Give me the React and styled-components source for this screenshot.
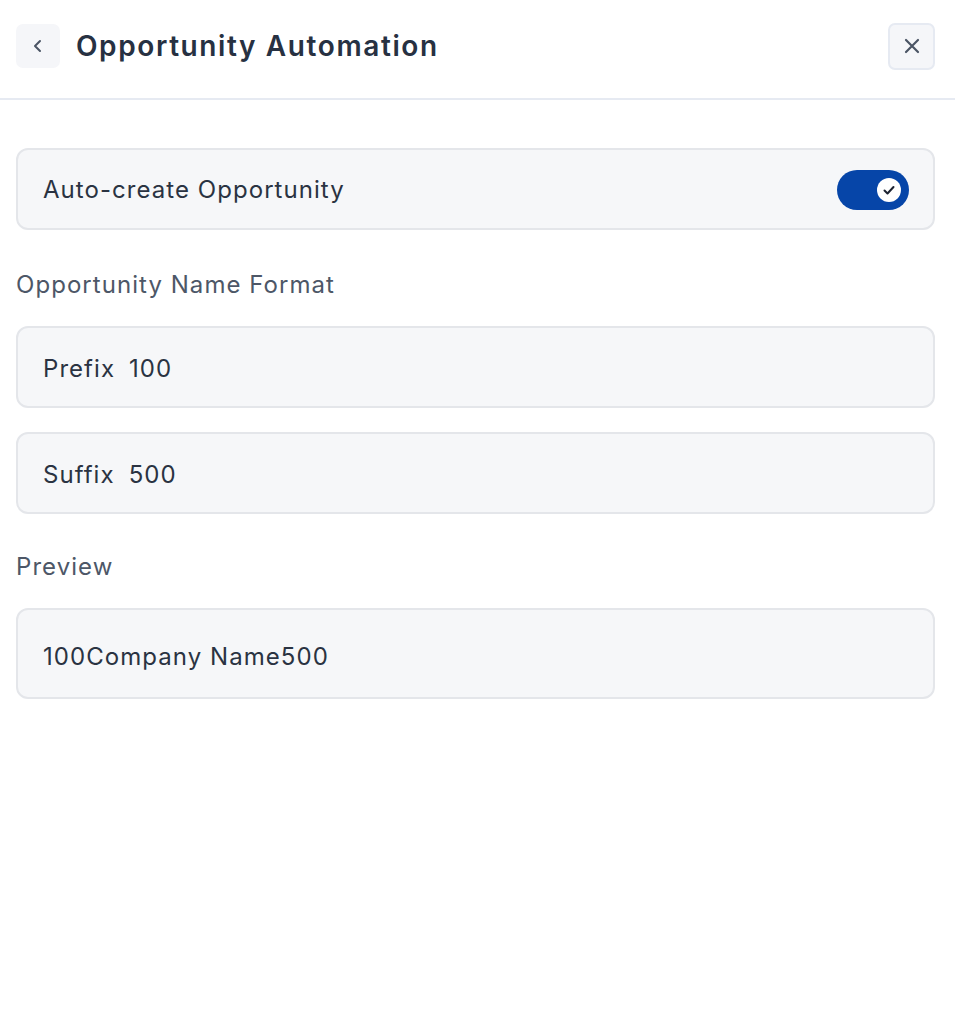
import React, { useState } from "react";
import styled, { createGlobalStyle } from "styled-components";

const GlobalStyle = createGlobalStyle`
  body {
    margin: 0;
    background: #ffffff;
    font-family: Inter, "Noto Sans", sans-serif;
    color: #273142;
  }
`;

const Page = styled.div`
  width: 955px;
  min-height: 1024px;
  background: #ffffff;
`;

const Header = styled.header`
  height: 100px;
  box-sizing: border-box;
  display: flex;
  align-items: center;
  justify-content: space-between;
  padding: 0 20px 6px 16px;
  border-bottom: 2px solid #e6eaf2;
`;

const TitleGroup = styled.div`
  display: flex;
  align-items: center;
  gap: 16px;
`;

const IconButton = styled.button`
  display: flex;
  align-items: center;
  justify-content: center;
  width: ${(p) => p.size}px;
  height: ${(p) => p.size}px;
  padding: 0;
  border-radius: 7px;
  background: #f5f6f9;
  border: ${(p) => (p.outlined ? "2px solid #e6eaf2" : "none")};
  color: #4b5565;
  cursor: pointer;
`;

const Title = styled.h1`
  margin: 0;
  font-size: 28px;
  font-weight: 600;
  color: #273142;
  letter-spacing: 1.6px;
`;

const Content = styled.main`
  padding: 48px 20px 0 16px;
  display: flex;
  flex-direction: column;
`;

const Card = styled.div`
  box-sizing: border-box;
  height: ${(p) => p.h || 82}px;
  display: flex;
  align-items: center;
  justify-content: space-between;
  padding: ${(p) => p.pt || 2}px 24px 0 25px;
  background: #f6f7f9;
  border: 2px solid #e4e6ea;
  border-radius: 12px;
  font-size: 24px;
  letter-spacing: 1.05px;
  color: #2a3342;
  margin-bottom: ${(p) => p.mb || 0}px;
`;

const Label = styled.div`
  font-size: 24px;
  letter-spacing: 1.05px;
  color: #4d5767;
  line-height: 30px;
  margin: ${(p) => p.mt}px 0 26px;
`;

const Gap = styled.span`
  display: inline-block;
  width: 14px;
`;

const Switch = styled.button`
  position: relative;
  width: 72px;
  height: 40px;
  padding: 0;
  border: none;
  border-radius: 20px;
  background: ${(p) => (p.on ? "#0645a8" : "#cfd4dc")};
  cursor: pointer;
`;

const Knob = styled.span`
  position: absolute;
  top: 8px;
  left: ${(p) => (p.on ? 40 : 8)}px;
  width: 24px;
  height: 24px;
  border-radius: 50%;
  background: #ffffff;
  display: flex;
  align-items: center;
  justify-content: center;
`;

const Chevron = () => (
  <svg width="16" height="16" viewBox="0 0 16 16" fill="none">
    <path d="M10 3L5 8l5 5" stroke="currentColor" strokeWidth="2" strokeLinecap="round" strokeLinejoin="round" />
  </svg>
);

const Cross = () => (
  <svg width="20" height="20" viewBox="0 0 20 20" fill="none">
    <path d="M4 4l12 12M16 4L4 16" stroke="currentColor" strokeWidth="2.2" strokeLinecap="round" />
  </svg>
);

const Check = () => (
  <svg width="14" height="14" viewBox="0 0 14 14" fill="none">
    <path d="M2.5 7.5l3 3 6-6.5" stroke="#1c2230" strokeWidth="2" strokeLinecap="round" strokeLinejoin="round" />
  </svg>
);

export default function App() {
  const [on, setOn] = useState(true);
  const prefix = "100";
  const suffix = "500";

  return (
    <Page>
      <GlobalStyle />
      <Header>
        <TitleGroup>
          <IconButton size={44}>
            <Chevron />
          </IconButton>
          <Title>Opportunity Automation</Title>
        </TitleGroup>
        <IconButton size={47} outlined>
          <Cross />
        </IconButton>
      </Header>
      <Content>
        <Card pt={1}>
          <span>Auto-create Opportunity</span>
          <Switch on={on} onClick={() => setOn(!on)}>
            <Knob on={on}>{on && <Check />}</Knob>
          </Switch>
        </Card>
        <Label mt={40}>Opportunity Name Format</Label>
        <Card mb={24}>
          <span>
            Prefix<Gap />
            {prefix}
          </span>
        </Card>
        <Card>
          <span>
            Suffix<Gap />
            {suffix}
          </span>
        </Card>
        <Label mt={38}>Preview</Label>
        <Card h={91} pt={6}>
          <span>{prefix}Company Name{suffix}</span>
        </Card>
      </Content>
    </Page>
  );
}
